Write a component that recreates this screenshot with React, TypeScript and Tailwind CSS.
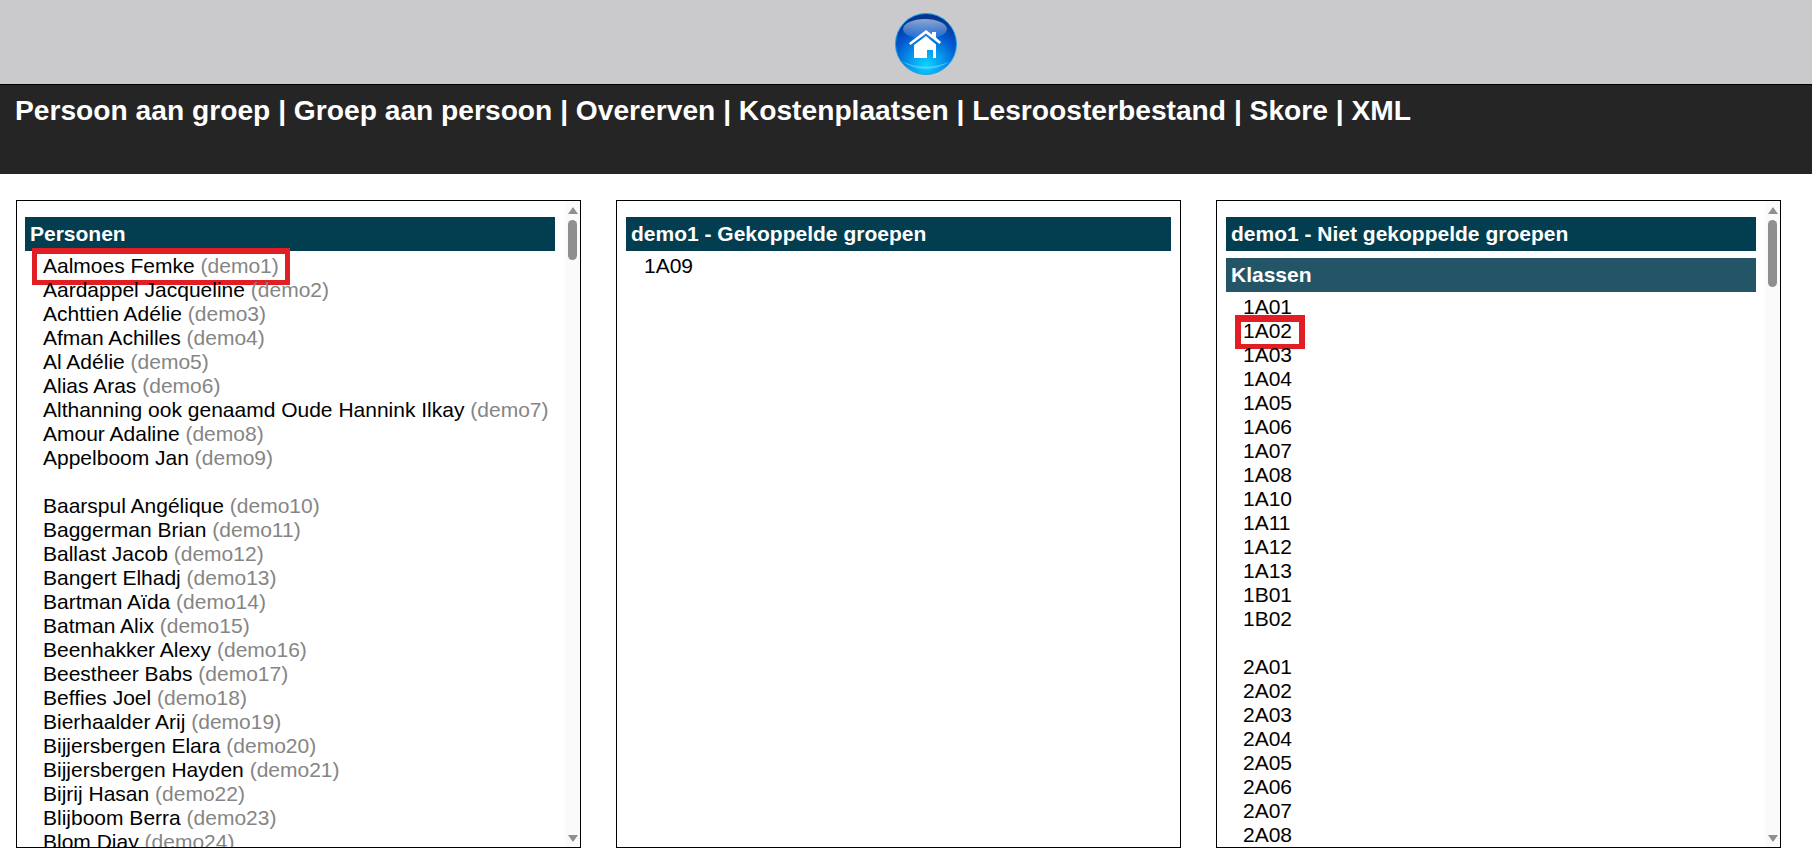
import React from 'react';

const personen: (string[] | null)[] = [
  ['Aalmoes Femke', 'demo1'],
  ['Aardappel Jacqueline', 'demo2'],
  ['Achttien Adélie', 'demo3'],
  ['Afman Achilles', 'demo4'],
  ['Al Adélie', 'demo5'],
  ['Alias Aras', 'demo6'],
  ['Althanning ook genaamd Oude Hannink Ilkay', 'demo7'],
  ['Amour Adaline', 'demo8'],
  ['Appelboom Jan', 'demo9'],
  null,
  ['Baarspul Angélique', 'demo10'],
  ['Baggerman Brian', 'demo11'],
  ['Ballast Jacob', 'demo12'],
  ['Bangert Elhadj', 'demo13'],
  ['Bartman Aïda', 'demo14'],
  ['Batman Alix', 'demo15'],
  ['Beenhakker Alexy', 'demo16'],
  ['Beestheer Babs', 'demo17'],
  ['Beffies Joel', 'demo18'],
  ['Bierhaalder Arij', 'demo19'],
  ['Bijjersbergen Elara', 'demo20'],
  ['Bijjersbergen Hayden', 'demo21'],
  ['Bijrij Hasan', 'demo22'],
  ['Blijboom Berra', 'demo23'],
  ['Blom Diay', 'demo24'],
];

const klassen: (string | null)[] = [
  '1A01', '1A02', '1A03', '1A04', '1A05', '1A06', '1A07', '1A08', '1A10', '1A11', '1A12', '1A13', '1B01', '1B02',
  null,
  '2A01', '2A02', '2A03', '2A04', '2A05', '2A06', '2A07', '2A08', '2A09',
];

const navItems = ['Persoon aan groep', 'Groep aan persoon', 'Overerven', 'Kostenplaatsen', 'Lesroosterbestand', 'Skore', 'XML'];

const HomeIcon = () => (
  <svg width="62" height="62" viewBox="0 0 62 62">
    <defs>
      <radialGradient id="bol" cx="50%" cy="85%" r="80%">
        <stop offset="0%" stopColor="#0bd4ff" />
        <stop offset="35%" stopColor="#0597ec" />
        <stop offset="68%" stopColor="#0358cf" />
        <stop offset="100%" stopColor="#02348f" />
      </radialGradient>
      <linearGradient id="glans" x1="0" y1="0" x2="0" y2="1">
        <stop offset="0%" stopColor="#ffffff" stopOpacity="0.55" />
        <stop offset="100%" stopColor="#ffffff" stopOpacity="0.08" />
      </linearGradient>
    </defs>
    <circle cx="31" cy="31" r="30.5" fill="url(#bol)" stroke="#19a6ee" strokeWidth="1" />
    <ellipse cx="30" cy="16" rx="22" ry="10" fill="url(#glans)" />
    <path d="M6 48 Q31 64 56 48 Q31 59 6 48 Z" fill="#7fdcff" opacity="0.5" />
    <path d="M14 30 L31 17 L37 21.500 L37 19 L41 19 L41 24.500 L46 29 L44.500 31 L31 20.500 L15.500 32 Z" fill="#fff" />
    <path d="M19 32 L31 23 L41 31.500 L41 45 L38 45 L38 37 L32 37 L32 45 L19 45 Z" fill="#fff" />
  </svg>
);

const Scrollbar = ({ thumb }: { thumb: string }) => (
  <div className="w-[15px] shrink-0 bg-[#fafafa] flex flex-col items-center pt-[6px]">
    <div className="w-0 h-0 border-x-[5px] border-x-transparent border-b-[7px] border-b-[#8f8f8f]" />
    <div className={`w-[9px] mt-[6px] rounded-full bg-[#8f8f8f] ${thumb}`} />
    <div className="flex-1" />
    <div className="w-0 h-0 border-x-[5px] border-x-transparent border-t-[7px] border-t-[#8f8f8f] mb-[5px]" />
  </div>
);

const Kop = ({ children, licht }: { children: React.ReactNode; licht?: boolean }) => (
  <div className={`h-[34px] pl-[5px] font-bold text-white leading-[34px] ${licht ? 'bg-[#245566]' : 'bg-[#023e50]'}`}>
    {children}
  </div>
);

export default function App() {
  return (
    <div className="bg-white w-[1812px] h-[858px] overflow-hidden font-['Liberation_Sans',Arial,sans-serif] text-[21px] leading-6 text-black">
      <div className="h-[85px] bg-[#cac9cb] border-b border-black flex justify-center pt-[13px] pl-[39px]">
        <HomeIcon />
      </div>
      <div className="h-[89px] bg-[#252525] pl-[15px] pt-[8px] text-[28.2px] leading-[34px] font-bold text-white">
        {navItems.join(' | ')}
      </div>

      <div className="flex gap-[35px] pl-4 pt-[26px]">
        {/* personen */}
        <div className="w-[565px] h-[648px] border border-black flex overflow-hidden">
          <div className="flex-1 min-w-0 pl-2 pr-[10px] pt-4 overflow-hidden">
            <Kop>Personen</Kop>
            <div className="pt-[3px] pl-[18px]">
              {personen.map((p, i) => (
                <div key={i} className="relative h-6 whitespace-nowrap">
                  {p && (
                    <>
                      {p[0]} <span className="text-[#858585]">({p[1]})</span>
                    </>
                  )}
                  {i === 0 && (
                    <span className="absolute left-[-11px] top-[-6px] w-[258px] h-[37px] border-x-[5px] border-t-[6px] border-b-[5px] border-[#e21e25]" />
                  )}
                </div>
              ))}
            </div>
          </div>
          <Scrollbar thumb="h-[40px]" />
        </div>

        {/* gekoppeld */}
        <div className="w-[565px] h-[648px] border border-black overflow-hidden">
          <div className="px-[9px] pt-4">
            <Kop>demo1 - Gekoppelde groepen</Kop>
            <div className="pt-[3px] pl-[18px]">1A09</div>
          </div>
        </div>

        {/* niet gekoppeld */}
        <div className="w-[565px] h-[648px] border border-black flex overflow-hidden">
          <div className="flex-1 min-w-0 pl-[9px] pr-[9px] pt-4 overflow-hidden">
            <Kop>demo1 - Niet gekoppelde groepen</Kop>
            <div className="mt-[7px]">
              <Kop licht>Klassen</Kop>
            </div>
            <div className="pt-[3px] pl-[17px]">
              {klassen.map((k, i) => (
                <div key={i} className="relative h-6">
                  {k}
                  {i === 1 && (
                    <span className="absolute left-[-8px] top-[-4px] w-[70px] h-[34px] border-x-[6px] border-t-[7px] border-b-[5px] border-[#e21e25]" />
                  )}
                </div>
              ))}
            </div>
          </div>
          <Scrollbar thumb="h-[67px]" />
        </div>
      </div>
    </div>
  );
}
